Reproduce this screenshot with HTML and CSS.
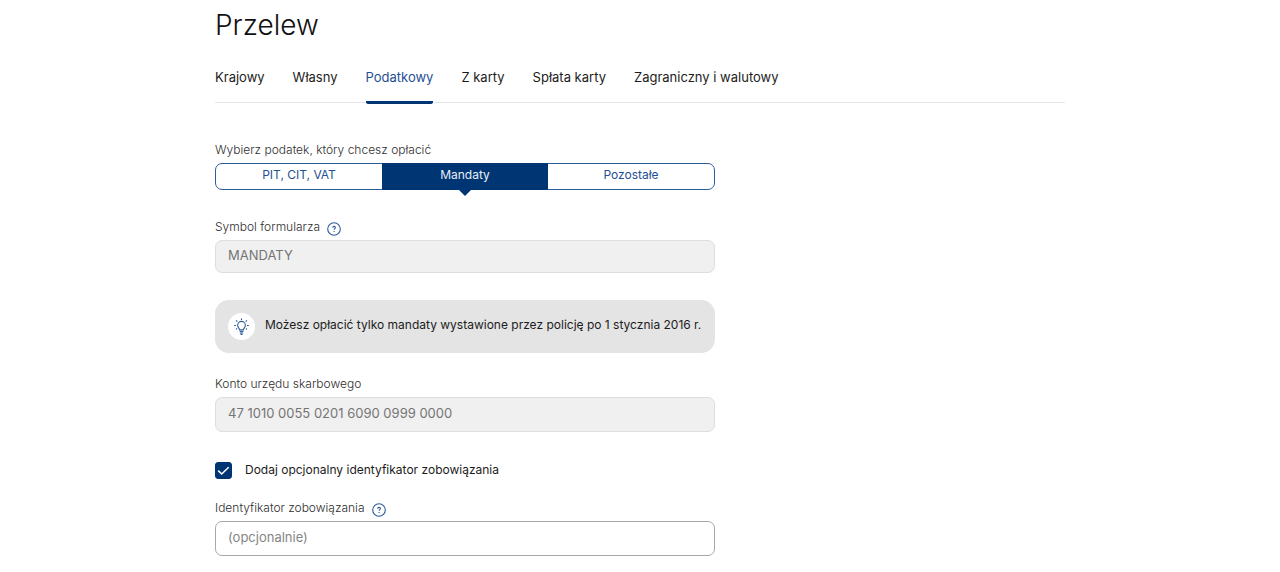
FILE: index.html
```
<!DOCTYPE html>
<html lang="pl">
<head>
<meta charset="utf-8">
<meta name="viewport" content="width=device-width, initial-scale=1">
<title>Przelew</title>
<link rel="stylesheet" href="styles.css">
</head>
<body>
<main class="page">
  <h1 class="title">Przelew</h1>
  <nav class="tabs">
    <a class="tab" href="#krajowy">Krajowy</a>
    <a class="tab" href="#wlasny">Własny</a>
    <a class="tab tab-active" href="#podatkowy" aria-current="page">Podatkowy</a>
    <a class="tab" href="#z-karty">Z karty</a>
    <a class="tab" href="#splata">Spłata karty</a>
    <a class="tab" href="#zagraniczny">Zagraniczny i walutowy</a>
  </nav>
  <form class="form">
    <div class="field">
      <span class="label" id="tax-label">Wybierz podatek, który chcesz opłacić</span>
      <div class="segments" role="group" aria-labelledby="tax-label">
        <button class="segment" type="button">PIT, CIT, VAT</button>
        <button class="segment segment-active" type="button" aria-pressed="true">Mandaty</button>
        <button class="segment" type="button">Pozostałe</button>
      </div>
    </div>

    <div class="field">
      <div class="label-row">
        <label class="label" for="symbol">Symbol formularza</label>
        <button class="help" type="button" aria-label="Pomoc">
          <svg class="help-icon" viewBox="0 0 14 14"><circle cx="7" cy="7" r="6.3"/><path d="M5.7 5.8C5.7 4.9 6.2 4.4 7 4.4s1.4.5 1.4 1.2c0 1-1.3 1-1.3 2.2M7.1 9v1"/></svg>
        </button>
      </div>
      <input class="input input-short" id="symbol" type="text" value="MANDATY" disabled>
    </div>

    <div class="info">
      <span class="info-badge">
        <svg class="info-icon" viewBox="0 0 18 18"><path d="M7 12.6c0-1.6-2.1-2.4-2.1-4.9a4.1 4.1 0 0 1 8.2 0c0 2.5-2.1 3.3-2.1 4.9zM7 14.3h4M7.3 15.9h3.4M8 17.3h2M9 .4v1.8M3.3 2.6l1.3 1.2M14.7 2.6l-1.3 1.2M1.3 8h1.9M14.8 8h1.9M3.2 12l1.1-.8M14.8 12l-1.1-.8"/></svg>
      </span>
      <p class="info-text">Możesz opłacić tylko mandaty wystawione przez policję po 1 stycznia 2016 r.</p>
    </div>

    <div class="field">
      <label class="label" for="account">Konto urzędu skarbowego</label>
      <input class="input" id="account" type="text" value="47 1010 0055 0201 6090 0999 0000" disabled>
    </div>

    <div class="check-row">
      <input class="check" id="add-id" type="checkbox" checked>
      <label class="check-label" for="add-id">Dodaj opcjonalny identyfikator zobowiązania</label>
      <svg class="check-mark" viewBox="0 0 17 17"><path d="M3.2 8.6l3.5 3.4 7-6.8"/></svg>
    </div>

    <div class="field">
      <div class="label-row">
        <label class="label" for="ident">Identyfikator zobowiązania</label>
        <button class="help" type="button" aria-label="Pomoc">
          <svg class="help-icon" viewBox="0 0 14 14"><circle cx="7" cy="7" r="6.3"/><path d="M5.7 5.8C5.7 4.9 6.2 4.4 7 4.4s1.4.5 1.4 1.2c0 1-1.3 1-1.3 2.2M7.1 9v1"/></svg>
        </button>
      </div>
      <input class="input" id="ident" type="text" placeholder="(opcjonalnie)">
    </div>
  </form>
</main>
</body>
</html>
```
FILE: styles.css
```
* {
  box-sizing: border-box;
}

body {
  margin: 0;
  background: #fff;
  color: #1c1c1c;
  font-family: Inter, "Open Sans", sans-serif;
  font-size: 12px;
  line-height: 16px;
}

button,
input {
  font: inherit;
}

.page {
  max-width: 850px;
  margin: 0 auto;
  padding: 7px 0 16px;
}

.title {
  margin: 0 0 24px;
  color: #111;
  font-size: 28px;
  font-weight: 300;
  line-height: 36px;
}

.tabs {
  display: flex;
  gap: 28px;
  border-bottom: 1px solid #e6e6e6;
}

.tab {
  margin-bottom: -2px;
  padding-bottom: 14px;
  border-bottom: 3px solid transparent;
  border-radius: 2px;
  color: #1c1c1c;
  font-size: 13px;
  line-height: 20px;
  text-decoration: none;
}

.tab-active {
  border-bottom-color: #003574;
  color: #1f4f94;
}

.form {
  display: flex;
  flex-direction: column;
  max-width: 500px;
  padding-top: 39px;
}

.field {
  display: flex;
  flex-direction: column;
  gap: 5px;
  margin-bottom: 29px;
}

.field:last-child {
  margin-bottom: 0;
}

.label-row {
  display: flex;
  gap: 7px;
  height: 16px;
}

.label {
  color: #2e2e2e;
  font-weight: 300;
}

.segments {
  display: grid;
  grid-template-columns: repeat(3, 1fr);
  height: 27px;
  border: 1px solid #2d5c9a;
  border-radius: 7px;
}

.segment {
  position: relative;
  padding: 0 0 4px;
  border: 0;
  background: none;
  color: #1f4f94;
}

.segment-active {
  margin: -1px 0;
  background: #003574;
  color: #e8eef6;
}

.segment-active::after {
  content: "";
  position: absolute;
  top: 100%;
  left: 50%;
  border: 6px solid transparent;
  border-top-color: #003574;
  border-bottom: 0;
  transform: translateX(-50%);
}

.help {
  align-self: flex-start;
  height: 14px;
  margin-top: 3px;
  padding: 0;
  border: 0;
  background: none;
}

.help-icon {
  display: block;
  width: 14px;
  height: 14px;
  fill: none;
  stroke: #2d5c9a;
  stroke-width: 1.1;
}

.input {
  width: 100%;
  height: 35px;
  padding: 0 12px 3px;
  border: 1px solid #a8a8a8;
  border-radius: 7px;
  background: #fff;
  color: #757575;
  font-size: 13px;
}

.input-short {
  height: 33px;
}

.input:disabled {
  border-color: #dedede;
  background: #f0f0f0;
}

.input::placeholder {
  color: #858585;
}

.info {
  display: flex;
  align-items: center;
  gap: 10px;
  min-height: 53px;
  margin: -2px 0 23px;
  padding: 0 13px;
  border-radius: 14px;
  background: #e4e4e4;
}

.info-badge {
  display: grid;
  flex: none;
  place-items: center;
  width: 27px;
  height: 27px;
  border-radius: 50%;
  background: #fff;
}

.info-icon {
  width: 17px;
  height: 17px;
  fill: none;
  stroke: #2d5c9a;
  stroke-width: 1.2;
}

.info-text {
  margin: 0;
  padding-bottom: 3px;
}

.check-row {
  display: grid;
  grid-template-columns: 17px 1fr;
  column-gap: 13px;
  margin: 1px 0 21px;
}

.check {
  grid-area: 1 / 1;
  appearance: none;
  width: 17px;
  height: 17px;
  margin: 0;
  border: 1px solid #003574;
  border-radius: 3px;
}

.check:checked {
  background: #003574;
}

.check-mark {
  grid-area: 1 / 1;
  width: 17px;
  height: 17px;
  fill: none;
  stroke: #fff;
  stroke-width: 1.6;
  pointer-events: none;
}

.check-label {
  grid-area: 1 / 2;
}
```
